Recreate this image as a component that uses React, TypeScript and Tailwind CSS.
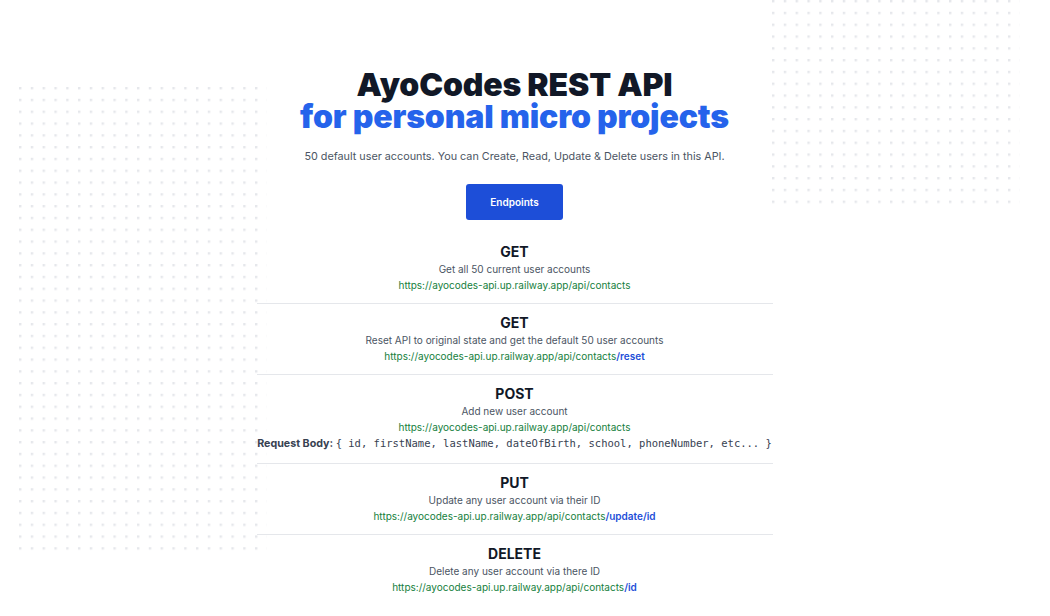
const DotGrid = ({ className, rows, cols }: { className: string; rows: number; cols: number }) => (
  <svg className={className} width={cols * 11.8} height={rows * 11.8} aria-hidden="true">
    <defs>
      <pattern id={`dots-${rows}-${cols}`} x="0" y="0" width="11.8" height="11.8" patternUnits="userSpaceOnUse">
        <rect x="0" y="0" width="2.4" height="2.4" fill="#e5e7eb" />
      </pattern>
    </defs>
    <rect width="100%" height="100%" fill={`url(#dots-${rows}-${cols})`} />
  </svg>
)

const endpoints = [
  {
    method: 'GET',
    description: 'Get all 50 current user accounts',
    extra: '',
  },
  {
    method: 'GET',
    description: 'Reset API to original state and get the default 50 user accounts',
    extra: '/reset',
  },
  {
    method: 'POST',
    description: 'Add new user account',
    extra: '',
    body: '{ id, firstName, lastName, dateOfBirth, school, phoneNumber, etc... }',
  },
  {
    method: 'PUT',
    description: 'Update any user account via their ID',
    extra: '/update/id',
  },
  {
    method: 'DELETE',
    description: 'Delete any user account via there ID',
    extra: '/id',
  },
]

export default function App() {
  return (
    <div className="relative min-h-screen overflow-hidden bg-white font-['Inter',sans-serif]">
      {/* Background dots */}
      <DotGrid className="absolute left-[19px] top-[87px]" rows={40} cols={21} />
      <DotGrid className="absolute left-[772px] top-[0px]" rows={18} cols={21} />

      <div className="relative w-[1029px] flex flex-col items-center pt-[69px]">
        <h1 className="text-center text-[32px] leading-[32px] font-black tracking-[-0.005em]">
          <span className="block text-[#111827]">AyoCodes REST API</span>
          <span className="block text-[#2563eb]">for personal micro projects</span>
        </h1>
        <p className="mt-[16px] text-[10.8px] leading-[16px] text-[#4b5563]">
          50 default user accounts. You can Create, Read, Update &amp; Delete users in this API.
        </p>
        <button className="mt-[19px] w-[97px] h-[36px] rounded-[3px] bg-[#1d4ed8] text-white text-[10px] font-semibold">
          Endpoints
        </button>

        <div className="mt-[22px] w-[516px]">
          {endpoints.map((e, i) => (
            <div
              key={i}
              className={`flex flex-col items-center text-center pb-[9px] ${i > 0 ? 'border-t border-[#e5e7eb] pt-[9px]' : ''}`}
            >
              <h3 className="text-[14px] leading-[20px] font-bold text-[#111827]">{e.method}</h3>
              <p className="text-[10px] leading-[14px] text-[#4b5563]">{e.description}</p>
              <p className="text-[10px] leading-[18px] text-[#15803d]">
                https://ayocodes-api.up.railway.app/api/contacts
                {e.extra && <span className="font-semibold text-[#1d4ed8]">{e.extra}</span>}
              </p>
              {e.body && (
                <p className="mb-[3px] whitespace-nowrap text-[10.7px] leading-[14px] text-[#374151]">
                  <span className="font-bold">Request Body: </span>
                  <span className="font-['DejaVu_Sans_Mono',monospace] text-[10.5px]">{e.body}</span>
                </p>
              )}
            </div>
          ))}
        </div>
      </div>
    </div>
  )
}
